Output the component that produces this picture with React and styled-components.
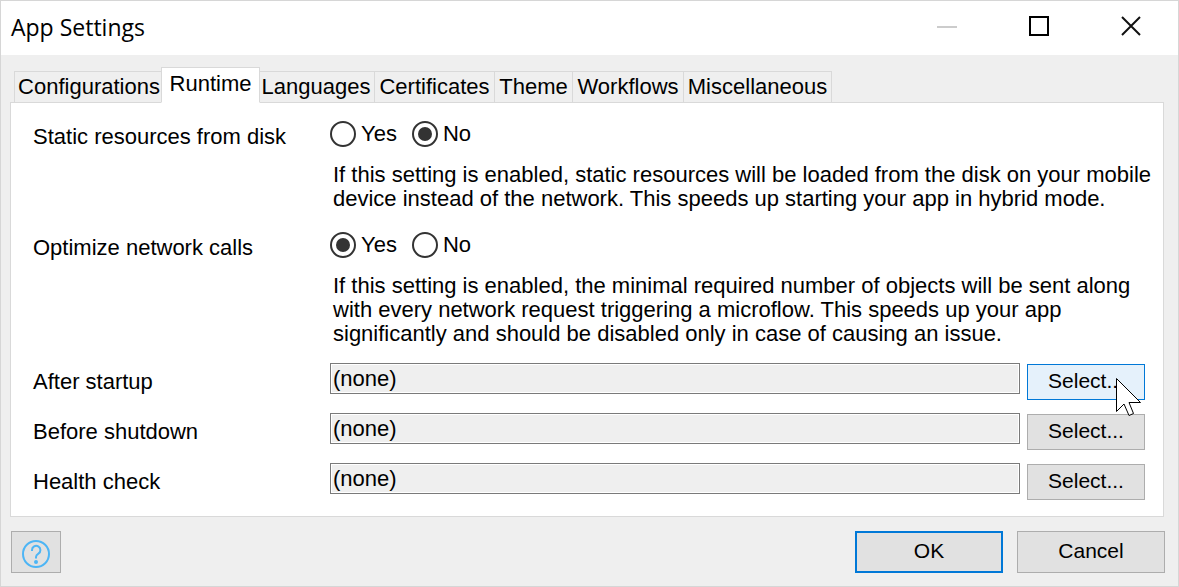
import React, { useState } from 'react';
import styled, { createGlobalStyle, css } from 'styled-components';

const GlobalStyle = createGlobalStyle`
  *, *::before, *::after { box-sizing: border-box; }
  body {
    margin: 0;
    background: #efefef;
    color: #000;
    font-family: "Liberation Sans", Arial, sans-serif;
    font-size: 22px;
    line-height: 24px;
  }
  button, input { font: inherit; color: inherit; }
`;

const Window = styled.main`
  display: flex;
  flex-direction: column;
  min-height: 100vh;
  border: 1px solid #d6d6d6;
  background: #efefef;
`;

const TitleBar = styled.header`
  display: flex;
  align-items: flex-start;
  justify-content: space-between;
  height: 54px;
  padding: 0 1px 0 10px;
  background: #fff;
`;

const Title = styled.h1`
  margin: 0;
  padding-top: 10px;
  font: 400 23px/32px "Open Sans", "Segoe UI", sans-serif;
`;

const Captions = styled.div`
  display: flex;
`;

const CaptionButton = styled.button`
  display: grid;
  place-items: center;
  width: 92px;
  height: 50px;
  padding: 0;
  border: 0;
  background: none;
`;

const Body = styled.div`
  flex: 1;
  display: flex;
  flex-direction: column;
  padding: 12px 14px 0 9px;
`;

const TabList = styled.div`
  display: flex;
  align-items: flex-end;
  height: 36px;
  margin-bottom: -1px;
  padding-left: 4px;
`;

const Tab = styled.button`
  flex: 0 0 ${(p) => p.$width}px;
  height: 32px;
  margin-right: -1px;
  padding: 0;
  border: 1px solid #d9d9d9;
  background: #efefef;
  text-align: center;
  white-space: nowrap;

  ${(p) =>
    p.$active &&
    css`
      position: relative;
      z-index: 1;
      height: 36px;
      margin-left: -2px;
      margin-right: -3px;
      padding-bottom: 3px;
      border-bottom-color: #fff;
      background: #fff;
    `}
`;

const Panel = styled.section`
  flex: 1;
  padding: 18px 0 16px 22px;
  border: 1px solid #d9d9d9;
  background: #fff;
`;

const SettingRow = styled.div`
  display: grid;
  grid-template-columns: 297px 1fr;
  margin-bottom: ${(p) => p.$gap}px;
`;

const SettingName = styled.div`
  padding-top: 4px;
`;

const Choices = styled.div`
  display: flex;
  gap: 15px;
`;

const Choice = styled.label`
  display: flex;
  align-items: center;
  gap: 5px;
  height: 26px;
`;

const Radio = styled.input`
  display: grid;
  place-items: center;
  appearance: none;
  width: 26px;
  height: 26px;
  margin: 0;
  border: 2px solid #333;
  border-radius: 50%;
  background: #fff;

  &:checked::before {
    content: "";
    width: 14px;
    height: 14px;
    border-radius: 50%;
    background: #333;
  }
`;

const Help = styled.p`
  margin: 16px 0 0;
  padding-left: 3px;
`;

const PickerRow = styled.div`
  display: grid;
  grid-template-columns: 297px 1fr 118px;
  align-items: start;
  height: 37px;
  margin-right: 18px;

  & + & { margin-top: 13px; }
`;

const PickerLabel = styled.label`
  padding-top: 7px;
`;

const PickerInput = styled.input`
  min-width: 0;
  height: 31px;
  margin-right: 7px;
  padding: 0 2px;
  border: 1px solid #7a7a7a;
  background: #efefef;
  box-shadow: inset 0 0 0 1px #fff;
`;

const PickerAction = styled.div`
  position: relative;
  align-self: end;
  height: 36px;
`;

const Button = styled.button`
  width: ${(p) => p.$width}px;
  height: ${(p) => p.$height}px;
  padding: 0 0 2px;
  border: 1px solid #adadad;
  background: #e1e1e1;
  font-size: 21px;

  ${(p) =>
    p.$hot &&
    css`
      border-color: #0078d7;
      background: #e5f1fb;
    `}
  ${(p) =>
    p.$primary &&
    css`
      border: 2px solid #0078d7;
    `}
`;

const IconButton = styled(Button)`
  display: grid;
  place-items: center;
  padding: 3px 0 0;
`;

const Pointer = styled.svg`
  position: absolute;
  z-index: 1;
  left: 88px;
  top: 13px;
  pointer-events: none;
`;

const Footer = styled.footer`
  display: flex;
  gap: 14px;
  padding: 14px 13px 13px 10px;
`;

const Spacer = styled.div`
  flex: 1;
`;

const tabs = [
  ['Configurations', 150],
  ['Runtime', 99],
  ['Languages', 118],
  ['Certificates', 121],
  ['Theme', 79],
  ['Workflows', 112],
  ['Miscellaneous', 149],
];

const pickers = [
  { id: 'after-startup', name: 'After startup', hot: true },
  { id: 'before-shutdown', name: 'Before shutdown' },
  { id: 'health-check', name: 'Health check' },
];

function YesNoSetting({ id, name, initial, gap, children }) {
  const [value, setValue] = useState(initial);
  return (
    <SettingRow $gap={gap} role="radiogroup" aria-labelledby={id}>
      <SettingName id={id}>{name}</SettingName>
      <div>
        <Choices>
          {['Yes', 'No'].map((option) => (
            <Choice key={option}>
              <Radio
                type="radio"
                name={id}
                checked={value === option}
                onChange={() => setValue(option)}
              />
              {option}
            </Choice>
          ))}
        </Choices>
        <Help>{children}</Help>
      </div>
    </SettingRow>
  );
}

export default function App() {
  const [active, setActive] = useState('Runtime');
  return (
    <>
      <GlobalStyle />
      <Window>
        <TitleBar>
          <Title>App Settings</Title>
          <Captions>
            <CaptionButton aria-label="Minimize" disabled>
              <svg width="20" height="20"><path d="M0 11h20" stroke="#ccc" strokeWidth="2" /></svg>
            </CaptionButton>
            <CaptionButton aria-label="Maximize">
              <svg width="20" height="20"><path d="M1 1h18v18H1z" fill="none" stroke="#000" strokeWidth="2" /></svg>
            </CaptionButton>
            <CaptionButton aria-label="Close">
              <svg width="20" height="20"><path d="M1 1l18 18M19 1L1 19" stroke="#111" strokeWidth="2" /></svg>
            </CaptionButton>
          </Captions>
        </TitleBar>

        <Body>
          <TabList role="tablist">
            {tabs.map(([name, width]) => (
              <Tab
                key={name}
                role="tab"
                aria-selected={name === active}
                $width={width}
                $active={name === active}
                onClick={() => setActive(name)}
              >
                {name}
              </Tab>
            ))}
          </TabList>

          <Panel role="tabpanel">
            <YesNoSetting id="static-resources" name="Static resources from disk" initial="No" gap={21}>
              If this setting is enabled, static resources will be loaded from the disk on your mobile
              device instead of the network. This speeds up starting your app in hybrid mode.
            </YesNoSetting>
            <YesNoSetting id="optimize-calls" name="Optimize network calls" initial="Yes" gap={17}>
              If this setting is enabled, the minimal required number of objects will be sent along
              with every network request triggering a microflow. This speeds up your app
              significantly and should be disabled only in case of causing an issue.
            </YesNoSetting>

            {pickers.map(({ id, name, hot }) => (
              <PickerRow key={id}>
                <PickerLabel htmlFor={id}>{name}</PickerLabel>
                <PickerInput id={id} value="(none)" readOnly />
                <PickerAction>
                  <Button $width={118} $height={36} $hot={hot}>Select...</Button>
                  {hot && (
                    <Pointer width="27" height="40" viewBox="0 0 27 40">
                      <path
                        d="M1.500 1.500V34.500L9 27L14 38.500L18.500 36.500L14 25.500H25.500Z"
                        fill="#fff"
                        stroke="#000"
                        strokeWidth="1"
                      />
                    </Pointer>
                  )}
                </PickerAction>
              </PickerRow>
            ))}
          </Panel>
        </Body>

        <Footer>
          <IconButton $width={50} $height={42} aria-label="Help">
            <svg width="28" height="28" viewBox="0 0 28 28" fill="none" stroke="#4db5f5" strokeWidth="2">
              <circle cx="14" cy="14" r="13" />
              <path d="M10 11V10a4.200 4.200 0 1 1 6.400 3.600C14.600 14.700 14 15.300 14 17v1.500" />
              <circle cx="14" cy="22" r="2" fill="#4db5f5" stroke="none" />
            </svg>
          </IconButton>
          <Spacer />
          <Button $width={148} $height={42} $primary>OK</Button>
          <Button $width={148} $height={42}>Cancel</Button>
        </Footer>
      </Window>
    </>
  );
}
